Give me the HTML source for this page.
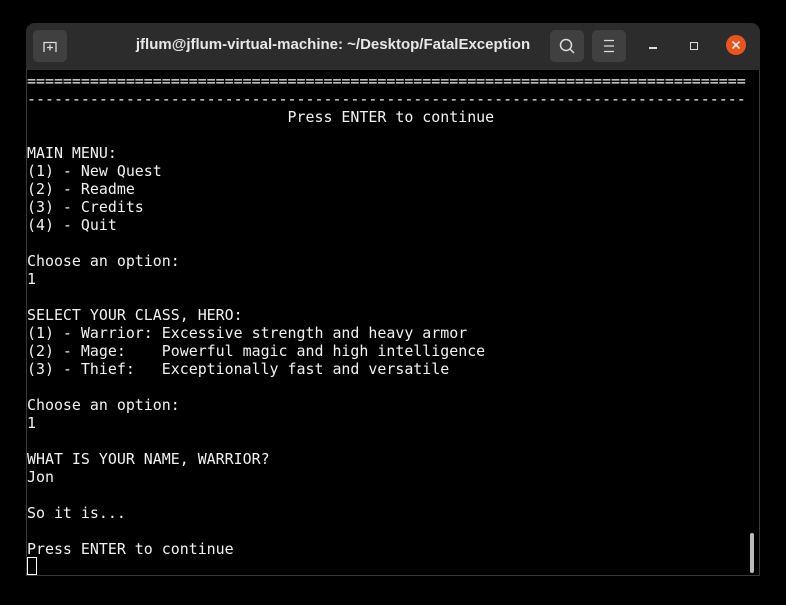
<!DOCTYPE html>
<html><head><style>
body{margin:0;width:786px;height:605px;background:#000;position:relative;overflow:hidden;font-family:"Liberation Sans",sans-serif}
.win{position:absolute;left:26px;top:23px;width:734px;height:553px;border:1px solid #3a3a3a;border-top:none;border-radius:9px 9px 0 0;background:#000;box-sizing:border-box}
.tb{position:absolute;left:26px;top:23px;width:734px;height:47px;background:#2c2c2c;border-radius:9px 9px 0 0}
.btn{position:absolute;top:7px;width:34px;height:32px;background:#404040;border-radius:5px}
.title{position:absolute;left:0;width:614px;top:13px;text-align:center;color:#e8e8e8;font-weight:bold;font-size:15px;white-space:nowrap}
pre{position:absolute;left:27px;top:72px;margin:0;font-family:"DejaVu Sans Mono","Liberation Mono",monospace;font-size:14.93px;line-height:18px;color:#f2f2f2}
</style></head><body>
<div class="win"></div>
<div class="tb">
<div class="btn" style="left:7px"><svg width="34" height="32"><path d="M11 22V12.5h12V22" fill="none" stroke="#ddd" stroke-width="1.3"/><path d="M17 14.5v6M14 17.5h6" stroke="#ddd" stroke-width="1.3"/></svg></div>
<div class="title">jflum@jflum-virtual-machine: ~/Desktop/FatalException</div>
<div class="btn" style="left:524px"><svg width="34" height="32"><circle cx="16" cy="15" r="5.5" fill="none" stroke="#ddd" stroke-width="1.5"/><path d="M20 19l4 4" stroke="#ddd" stroke-width="1.5"/></svg></div>
<div class="btn" style="left:566px"><svg width="34" height="32"><path d="M12 10.5h10M12 16h10M12 21.5h10" stroke="#ddd" stroke-width="1.3"/></svg></div>
<div style="position:absolute;left:623px;top:24px;width:8px;height:1.5px;background:#ddd"></div>
<div style="position:absolute;left:664px;top:19px;width:8px;height:8px;border:1.3px solid #ddd;box-sizing:border-box"></div>
<div style="position:absolute;left:700px;top:12px;width:20px;height:20px;border-radius:50%;background:#e95420"><svg width="20" height="20"><path d="M6.5 6.5l7 7M13.5 6.5l-7 7" stroke="#fff" stroke-width="1.5"/></svg></div>
</div>
<pre>================================================================================
--------------------------------------------------------------------------------
                             Press ENTER to continue

MAIN MENU:
(1) - New Quest
(2) - Readme
(3) - Credits
(4) - Quit

Choose an option:
1

SELECT YOUR CLASS, HERO:
(1) - Warrior: Excessive strength and heavy armor
(2) - Mage:    Powerful magic and high intelligence
(3) - Thief:   Exceptionally fast and versatile

Choose an option:
1

WHAT IS YOUR NAME, WARRIOR?
Jon

So it is...

Press ENTER to continue
</pre>
<div style="position:absolute;left:27px;top:557px;width:10px;height:18px;border:1px solid #fff;box-sizing:border-box"></div>
<div style="position:absolute;left:750px;top:533px;width:4px;height:40px;background:#bbb;border-radius:2px"></div>
</body></html>
